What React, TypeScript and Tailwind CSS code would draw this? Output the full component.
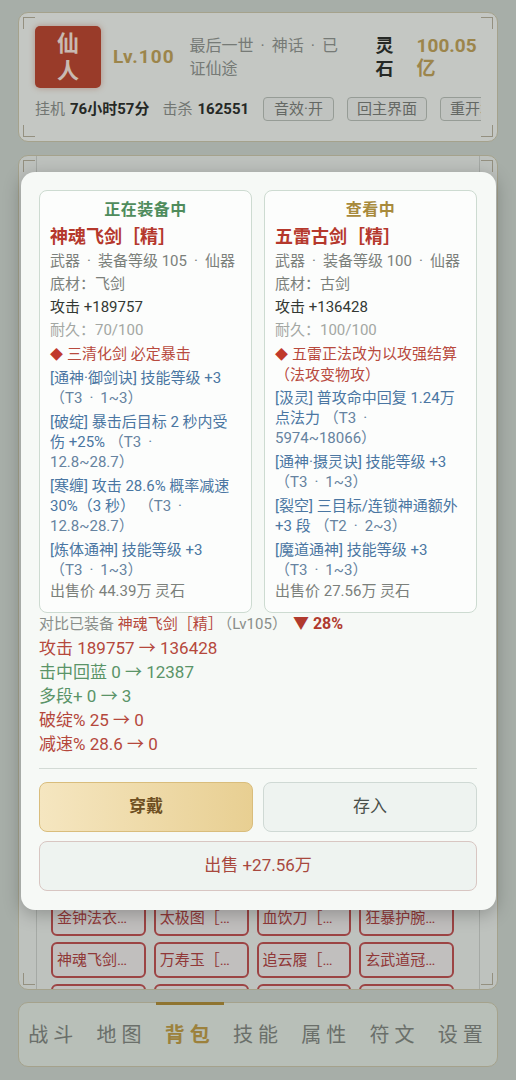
import React from 'react';

// 一行文字：[正文, 档位注释]
type Seg = [string, string?];

interface ItemCardProps {
  title: string;
  titleClass: string;
  name: string;
  level: string;
  base: string;
  atk: string;
  dur: string;
  special: string[];
  affixes: Seg[][];
  sale: string;
}

const equipped: ItemCardProps = {
  title: '正在装备中',
  titleClass: 'text-[#4f8c5c]',
  name: '神魂飞剑［精］',
  level: '105',
  base: '底材：飞剑',
  atk: '攻击 +189757',
  dur: '耐久：70/100',
  special: ['三清化剑 必定暴击'],
  affixes: [
    [['[通神·御剑诀] 技能等级 +3'], ['', '（T3 · 1~3）']],
    [['[破绽] 暴击后目标 2 秒内受'], ['伤 +25% ', '（T3 ·'], ['', '12.8~28.7）']],
    [['[寒缠] 攻击 28.6% 概率减速'], ['30%（3 秒） ', '（T3 ·'], ['', '12.8~28.7）']],
    [['[炼体通神] 技能等级 +3'], ['', '（T3 · 1~3）']],
  ],
  sale: '出售价 44.39万 灵石',
};

const viewing: ItemCardProps = {
  title: '查看中',
  titleClass: 'text-[#a88a3c]',
  name: '五雷古剑［精］',
  level: '100',
  base: '底材：古剑',
  atk: '攻击 +136428',
  dur: '耐久：100/100',
  special: ['五雷正法改为以攻强结算', '（法攻变物攻）'],
  affixes: [
    [['[汲灵] 普攻命中回复 1.24万'], ['点法力 ', '（T3 ·'], ['', '5974~18066）']],
    [['[通神·摄灵诀] 技能等级 +3'], ['', '（T3 · 1~3）']],
    [['[裂空] 三目标/连锁神通额外'], ['+3 段 ', '（T2 · 2~3）']],
    [['[魔道通神] 技能等级 +3'], ['', '（T3 · 1~3）']],
  ],
  sale: '出售价 27.56万 灵石',
};

const diffs = [
  { text: '攻击 189757 → 136428', cls: 'text-[#b5483c]' },
  { text: '击中回蓝 0 → 12387', cls: 'text-[#5a9468]' },
  { text: '多段+ 0 → 3', cls: 'text-[#5a9468]' },
  { text: '破绽% 25 → 0', cls: 'text-[#b5483c]' },
  { text: '减速% 28.6 → 0', cls: 'text-[#b5483c]' },
];

const bagItems = [
  '金钟法衣［精］', '太极图［精］', '血饮刀［精］', '狂暴护腕［精］',
  '神魂飞剑［精］', '万寿玉［精］', '追云履［精］', '玄武道冠［精］',
  '青鸾羽衣［精］', '乾坤镯［精］', '落星枪［精］', '紫霄冠［精］',
];

const tabs = ['战斗', '地图', '背包', '技能', '属性', '符文', '设置'];

// 把 " · " 换成带间距的分隔点
const dotted = (s: string) => {
  const parts = s.split(' ·');
  return parts.map((part, i) => (
    <React.Fragment key={i}>
      {i > 0 && <span className="mx-[7px]">·</span>}
      {i > 0 ? part.replace(/^ /, '') : part}
    </React.Fragment>
  ));
};

// 卡片四角的装饰线
const Corners: React.FC = () => (
  <>
    <span className="absolute left-[4px] top-[4px] w-[12px] h-[12px] border-l border-t border-[#b9b5a0]" />
    <span className="absolute right-[4px] top-[4px] w-[12px] h-[12px] border-r border-t border-[#b9b5a0]" />
    <span className="absolute left-[4px] bottom-[4px] w-[12px] h-[12px] border-l border-b border-[#b9b5a0]" />
    <span className="absolute right-[4px] bottom-[4px] w-[12px] h-[12px] border-r border-b border-[#b9b5a0]" />
  </>
);

const ItemCard: React.FC<ItemCardProps> = (p) => (
  <div className="rounded-[8px] border border-[#cddbd1] bg-[#fcfdfc] px-[10px] pt-[8px] pb-[11px] whitespace-nowrap">
    <div className={`text-center text-[16px] leading-[22px] font-bold tracking-[0.5px] ${p.titleClass}`}>{p.title}</div>
    <div className="mt-[3px] text-[18px] leading-[26px] font-bold text-[#b5382c]">{p.name}</div>
    <div className="text-[15px] leading-[23px] text-[#7b807b]">{dotted(`武器 · 装备等级 ${p.level} · 仙器`)}</div>
    <div className="text-[15px] leading-[23px] text-[#7b807b]">{p.base}</div>
    <div className="text-[15px] leading-[23px] text-[#333833]">{p.atk}</div>
    <div className="text-[15px] leading-[23px] text-[#a3a7a3]">{p.dur}</div>
    <div className="mt-[2px] text-[15px] leading-[20px] text-[#b84a3e]">
      {p.special.map((line, i) => (
        <div key={i}>
          {i === 0 && <span className="mr-[4px] text-[13px] text-[#c0392b]">◆</span>}
          {line}
        </div>
      ))}
    </div>
    {p.affixes.map((lines, i) => (
      <div key={i} className={`${i === 0 ? 'mt-[3px]' : 'mt-[4px]'} text-[15px] leading-[20px] text-[#4a76a2]`}>
        {lines.map(([main, tier], j) => (
          <div key={j}>
            {main}
            {tier && <span className="text-[#6683a0]">{dotted(tier)}</span>}
          </div>
        ))}
      </div>
    ))}
    <div className="mt-[1px] text-[15px] leading-[20px] text-[#7b807b]">{p.sale}</div>
  </div>
);

export default function App() {
  return (
    <div className="relative h-[1080px] overflow-hidden bg-[#d1dad2] font-['Roboto','Noto_Sans_CJK_SC',sans-serif]">
      <div className="flex h-full flex-col px-[18px] pt-[12px] pb-[13px]">
        {/* 顶部角色信息 */}
        <div className="relative rounded-[10px] border border-[#cfcbb0] bg-[#f5f9f4] px-[16px] pt-[13px] pb-[20px]">
          <Corners />
          <div className="flex items-center">
            <div className="flex h-[62px] w-[66px] flex-col items-center justify-center rounded-[5px] bg-[#c04a34] text-[22px] leading-[27px] font-bold text-[#fbe9df] shadow-[0_0_6px_rgba(190,80,50,0.4)]">
              <span>仙</span>
              <span>人</span>
            </div>
            <div className="ml-[12px] text-[19px] font-bold tracking-[1px] text-[#c4a75e]">Lv.100</div>
            <div className="ml-[15px] w-[160px] text-[16px] leading-[23px] text-[#949994]">{dotted('最后一世 · 神话 · 已证仙途')}</div>
            <div className="ml-[26px] w-[18px] text-[18px] leading-[23px] font-bold text-[#2f332f]">灵石</div>
            <div className="ml-[23px] w-[62px] text-[19px] leading-[23px] font-bold text-[#c4a75e]">100.05亿</div>
          </div>
          <div className="mt-[9px] flex items-center overflow-hidden whitespace-nowrap text-[15px]">
            <span className="text-[#8f948f]">挂机</span>
            <span className="ml-[5px] font-bold text-[#2f332f]">76小时57分</span>
            <span className="ml-[13px] text-[#8f948f]">击杀</span>
            <span className="ml-[5px] font-bold text-[#2f332f]">162551</span>
            <span className="ml-[14px] rounded-[4px] border border-[#bcc4bc] bg-[#f1f4f0] px-[10px] leading-[22px] text-[#7d827d]">音效·开</span>
            <span className="ml-[13px] rounded-[4px] border border-[#bcc4bc] bg-[#f1f4f0] px-[9px] leading-[22px] text-[#7d827d]">回主界面</span>
            <span className="ml-[13px] rounded-[4px] border border-[#bcc4bc] bg-[#f1f4f0] px-[9px] leading-[22px] text-[#7d827d]">重开本世</span>
          </div>
        </div>

        {/* 背包面板 */}
        <div className="relative mt-[13px] flex-1 overflow-hidden rounded-[10px] border border-[#cfcbb0] bg-[#eef3ee] px-[17px]">
          <Corners />
          <div className="h-full overflow-hidden border-x border-[#cfd4cf] pl-[14px] pr-[25px] pt-[744px]">
            <div className="grid grid-cols-4 gap-x-[8px] gap-y-[6px]">
              {bagItems.map((n) => (
                <div
                  key={n}
                  className="h-[36px] truncate rounded-[6px] border-2 border-[#c45656] bg-[#f2efee] px-[4px] text-[15px] leading-[32px] text-[#b44646]"
                >
                  {n}
                </div>
              ))}
            </div>
          </div>
        </div>

        {/* 底部导航 */}
        <div className="mt-[12px] grid h-[65px] grid-cols-7 rounded-[10px] border border-[#cfcbb0] bg-[#e6efe6]">
          {tabs.map((t) => (
            <div key={t} className="relative flex items-center justify-center">
              {t === '背包' && <span className="absolute left-0 right-0 top-[-1px] h-[3px] bg-[#b3913c]" />}
              <span
                className={`text-[20px] tracking-[5px] ${t === '背包' ? 'font-bold text-[#c3a24c]' : 'text-[#858b85]'}`}
              >
                {t}
              </span>
            </div>
          ))}
        </div>
      </div>

      {/* 遮罩 */}
      <div className="absolute inset-0 bg-black/20" />

      {/* 装备对比弹窗 */}
      <div className="absolute left-[21px] top-[172px] w-[475px] rounded-[14px] bg-[#f6f9f6] pl-[18px] pr-[19px] pt-[18px] pb-[19px] shadow-[0_4px_18px_rgba(0,0,0,0.25)]">
        <div className="grid grid-cols-2 gap-[12px]">
          <ItemCard {...equipped} />
          <ItemCard {...viewing} />
        </div>

        <div className="mt-[1px] text-[15px] leading-[20px] text-[#8a8e8a]">
          对比已装备 <span className="text-[#b5483c]">神魂飞剑［精］</span>
          <span className="ml-[2px]">（Lv105）</span>
          <span className="ml-[6px] text-[16px] font-bold text-[#b03a2e]">▼ 28%</span>
        </div>
        <div className="mt-[2px]">
          {diffs.map((d) => (
            <div key={d.text} className={`text-[17px] leading-[24px] ${d.cls}`}>
              {d.text}
            </div>
          ))}
        </div>

        <div className="mt-[12px] h-px bg-[#d3dad5]" />

        <div className="mt-[13px] grid grid-cols-2 gap-[10px]">
          <button className="h-[50px] rounded-[8px] border border-[#d9bd7c] bg-gradient-to-r from-[#f5e6c0] to-[#e8cf92] text-[17px] font-bold text-[#6e4f22]">
            穿戴
          </button>
          <button className="h-[50px] rounded-[8px] border border-[#cfd9d4] bg-[#eef3f0] text-[17px] text-[#4a4f4a]">
            存入
          </button>
        </div>
        <button className="mt-[9px] h-[50px] w-full rounded-[8px] border border-[#d8c6c2] bg-[#eef3f0] text-[17px] text-[#a8483e]">
          出售 +27.56万
        </button>
      </div>
    </div>
  );
}
